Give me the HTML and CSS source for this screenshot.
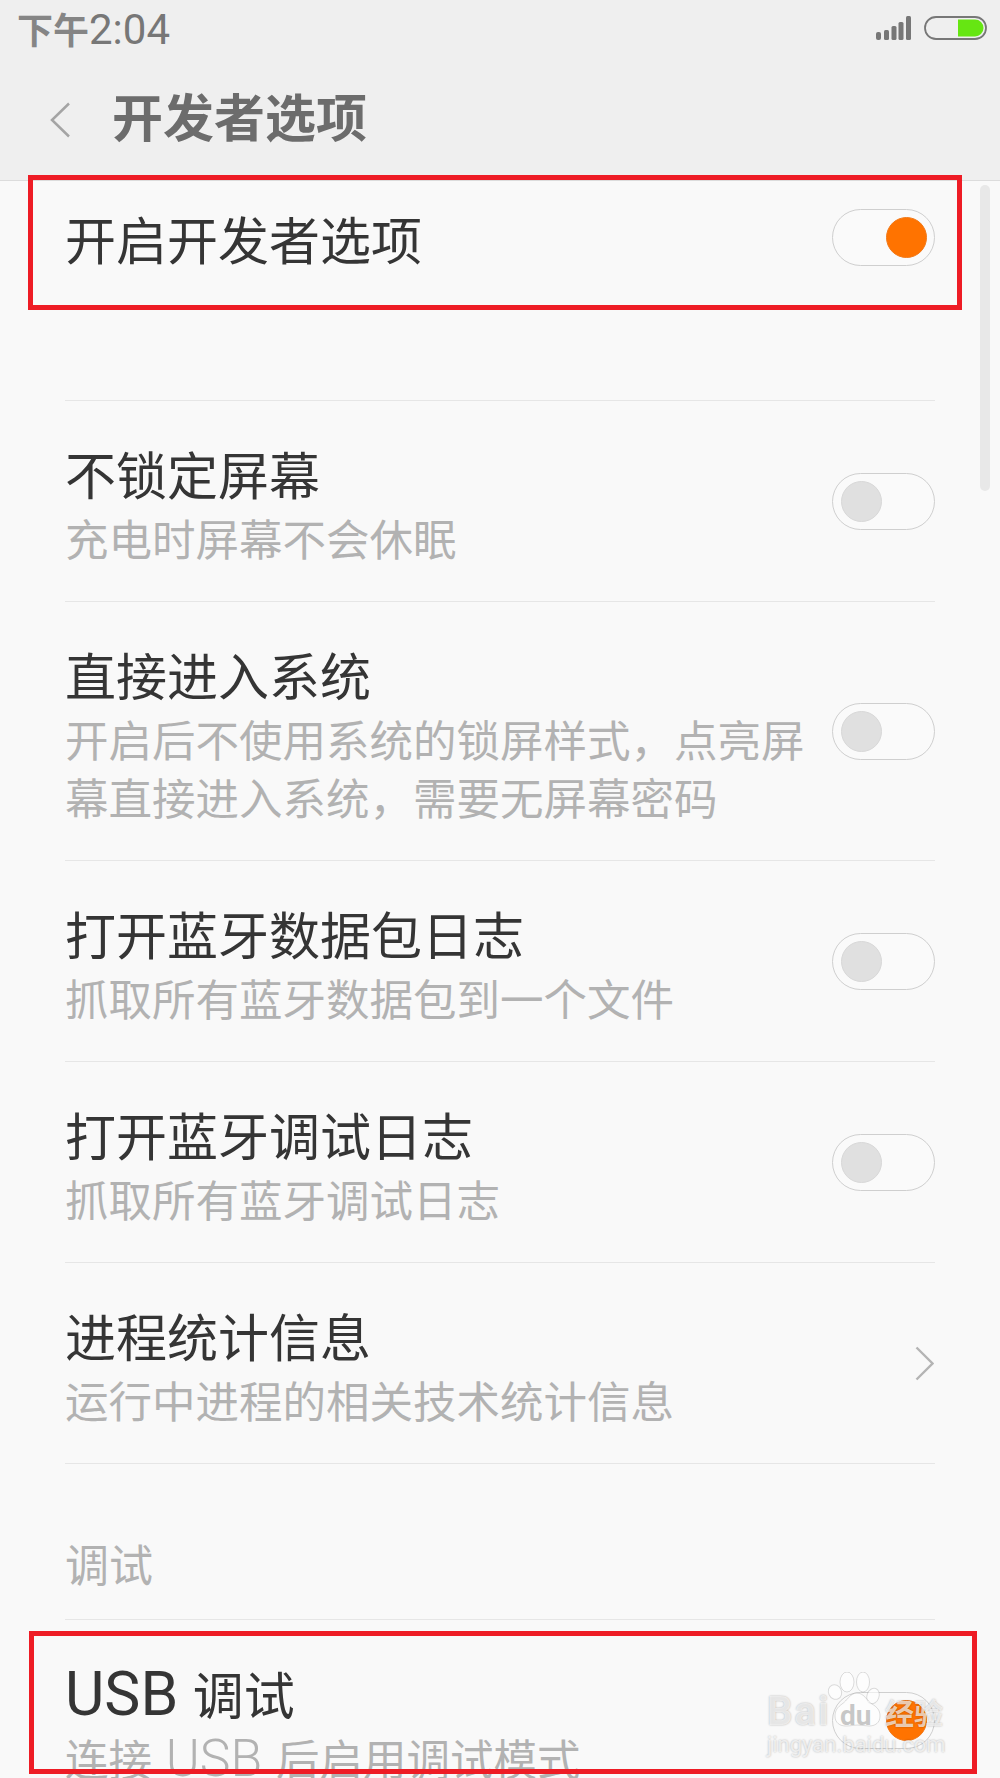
FILE: index.html
```html
<!DOCTYPE html>
<html lang="zh-CN">
<head>
    <meta charset="UTF-8">
    <meta name="viewport" content="width=device-width, initial-scale=1.0">
    <title>开发者选项</title>
    <link rel="stylesheet" href="styles.css">
</head>
<body>
    <div class="screen">
        <div class="header">
            <div class="status-bar">
                <span class="clock">下午<span class="clock-digits">2:04</span></span>
                <div class="status-icons">
                    <svg class="signal" width="36" height="25" viewBox="0 0 36 25">
                        <rect x="0" y="16" width="5" height="8" rx="2"/>
                        <rect x="8" y="14" width="5" height="10" rx="1.5"/>
                        <rect x="15.500" y="10" width="5" height="14" rx="1.5"/>
                        <rect x="22.500" y="6" width="5" height="18" rx="1.5"/>
                        <rect x="30" y="0" width="5" height="24" rx="1.5"/>
                    </svg>
                    <svg class="battery" width="63" height="24" viewBox="0 0 63 24">
                        <rect x="1" y="1" width="61" height="22" rx="11" fill="none" stroke="#777" stroke-width="1.800"/>
                        <path d="M34 3.500h17a8.500 8.500 0 0 1 0 17H34z" fill="#66e612"/>
                    </svg>
                </div>
            </div>
            <div class="nav-bar">
                <svg class="back" width="22" height="36" viewBox="0 0 22 36">
                    <path d="M20 1.500 3 18l17 16.500" fill="none" stroke="#a4a4a4" stroke-width="2.500"/>
                </svg>
                <h1>开发者选项</h1>
            </div>
        </div>

        <div class="list">
            <div class="row master">
                <div class="row-text"><div class="row-title">开启开发者选项</div></div>
                <div class="toggle on"><div class="knob"></div></div>
            </div>
            <div class="gap"></div>

            <div class="row">
                <div class="row-text">
                    <div class="row-title">不锁定屏幕</div>
                    <div class="row-sub">充电时屏幕不会休眠</div>
                </div>
                <div class="toggle"><div class="knob"></div></div>
            </div>
            <div class="row">
                <div class="row-text">
                    <div class="row-title">直接进入系统</div>
                    <div class="row-sub">开启后不使用系统的锁屏样式，点亮屏幕直接进入系统，需要无屏幕密码</div>
                </div>
                <div class="toggle"><div class="knob"></div></div>
            </div>
            <div class="row">
                <div class="row-text">
                    <div class="row-title">打开蓝牙数据包日志</div>
                    <div class="row-sub">抓取所有蓝牙数据包到一个文件</div>
                </div>
                <div class="toggle"><div class="knob"></div></div>
            </div>
            <div class="row">
                <div class="row-text">
                    <div class="row-title">打开蓝牙调试日志</div>
                    <div class="row-sub">抓取所有蓝牙调试日志</div>
                </div>
                <div class="toggle"><div class="knob"></div></div>
            </div>
            <div class="row">
                <div class="row-text">
                    <div class="row-title">进程统计信息</div>
                    <div class="row-sub">运行中进程的相关技术统计信息</div>
                </div>
                <svg class="chevron" width="19" height="35" viewBox="0 0 19 35">
                    <path d="M1.500 1.500 17.500 17.500 1.500 33.500" fill="none" stroke="#b4b4b4" stroke-width="2.400"/>
                </svg>
            </div>

            <div class="section-label">调试</div>

            <div class="row">
                <div class="row-text">
                    <div class="row-title"><span class="latin">USB</span> 调试</div>
                    <div class="row-sub">连接 <span class="latin">USB</span> 后启用调试模式</div>
                </div>
                <div class="toggle on"><div class="knob"></div></div>
            </div>
        </div>

        <div class="scrollbar"></div>
        <div class="mark mark-top"></div>
        <div class="mark mark-bottom"></div>

        <div class="watermark">
            <svg class="paw" width="54" height="56" viewBox="0 0 54 56">
                <ellipse cx="8" cy="20" rx="6.500" ry="7.500" transform="rotate(-25 8 20)"/>
                <ellipse cx="20" cy="10" rx="7" ry="10"/>
                <ellipse cx="36" cy="10" rx="6.500" ry="10"/>
                <ellipse cx="46" cy="24" rx="6" ry="8" transform="rotate(20 46 24)"/>
                <path d="M30 21c-7 0-10 8-15 11-4 3-7 6-7 12 0 7 5 10 11 10 5 0 8-1 12-1s7 1 11 1c6 0 11-3 11-10 0-6-3-9-8-12-5-3-8-11-15-11z"/>
            </svg>
            <div class="mark-line">
                <span class="mark-bai">Bai</span>
                <span class="mark-du">du</span>
                <span class="mark-cn">经验</span>
            </div>
            <div class="mark-url">jingyan.baidu.com</div>
        </div>
    </div>
</body>
</html>
```

FILE: styles.css
```css
* {
    box-sizing: border-box;
}

body {
    margin: 0;
    background-color: #f9f9f9;
    font-family: Roboto, "Noto Sans CJK SC", sans-serif;
}

.screen {
    position: relative;
    width: 1000px;
    height: 1778px;
    overflow: hidden;
    background-color: #f9f9f9;
}

.header {
    height: 181px;
    background-color: #efefef;
    border-bottom: 1px solid #dcdcdc;
}

.status-bar {
    display: flex;
    justify-content: space-between;
    align-items: center;
    height: 58px;
    padding: 0 13px 2px 17px;
}

.clock {
    font-size: 36px;
    font-weight: 700;
    color: #858585;
}

.clock-digits {
    font-size: 42px;
    font-weight: 400;
    line-height: 1;
    color: #777;
}

.status-icons {
    display: flex;
    align-items: center;
    gap: 12px;
}

.signal {
    fill: #777;
}

.nav-bar {
    display: flex;
    align-items: center;
    gap: 41px;
    height: 122px;
    padding: 2px 0 0 49px;
}

.nav-bar h1 {
    margin: 0;
    font-size: 51px;
    font-weight: 700;
    color: #6c6c6c;
    line-height: 64px;
}

.list {
    padding: 0 65px;
}

.row {
    display: flex;
    align-items: center;
    height: 201px;
    border-bottom: 1px solid #e6e6e6;
}

.row:nth-child(4) {
    height: 259px;
}

.row:last-child {
    border-bottom: none;
}

.row.master {
    height: 112px;
    border-bottom: none;
}

.gap {
    height: 108px;
    border-bottom: 1px solid #e6e6e6;
}

.row-text {
    flex: 1;
    padding: 12px 10px 0 0;
}

.row-title {
    font-size: 51px;
    line-height: 70px;
    color: #353535;
    word-spacing: 2px;
}

.row-sub {
    font-size: 43.500px;
    line-height: 58px;
    color: #b2b2b2;
    word-spacing: 3px;
}

.latin {
    font-size: 1.190em;
    font-weight: 300;
    line-height: 1;
}

.row-title .latin {
    font-weight: 400;
}

.toggle {
    display: flex;
    align-items: center;
    flex-shrink: 0;
    width: 103px;
    height: 57px;
    padding: 0 8px;
    background-color: #fafafa;
    border: 1px solid #cfcfcf;
    border-radius: 29px;
}

.toggle.on {
    justify-content: flex-end;
    padding-right: 7px;
}

.knob {
    width: 41px;
    height: 41px;
    border-radius: 50%;
    background-color: #e0e0e0;
    border: 1px solid #d8d8d8;
}

.toggle.on .knob {
    background-color: #ff7300;
    border-color: #f27a1a;
}

.chevron {
    flex-shrink: 0;
    margin-right: 1px;
}

.section-label {
    height: 156px;
    padding-top: 74px;
    font-size: 44px;
    line-height: 58px;
    color: #b2b2b2;
    border-bottom: 1px solid #e6e6e6;
}

.scrollbar {
    position: absolute;
    left: 980px;
    top: 185px;
    width: 10px;
    height: 306px;
    border-radius: 5px;
    background-color: #e8e8e8;
}

.mark {
    position: absolute;
    border: 5px solid #ee1c25;
}

.mark-top {
    left: 28px;
    top: 175px;
    width: 934px;
    height: 135px;
}

.mark-bottom {
    left: 29px;
    top: 1631px;
    width: 948px;
    height: 143px;
}

.watermark {
    position: absolute;
    left: 767px;
    top: 1672px;
    width: 180px;
    height: 86px;
    color: rgba(255, 255, 255, 0.7);
    text-shadow: 0 0 2px rgba(0, 0, 0, 0.3);
}

.paw {
    position: absolute;
    left: 60px;
    top: 0;
    fill: rgba(255, 255, 255, 0.6);
    stroke: rgba(0, 0, 0, 0.13);
    stroke-width: 1;
}

.mark-line {
    position: absolute;
    left: 0;
    top: 18px;
    display: flex;
    align-items: baseline;
    font-weight: 700;
    line-height: 44px;
}

.mark-bai {
    width: 73px;
    font-size: 40px;
    letter-spacing: 2px;
}

.mark-du {
    width: 45px;
    font-size: 28px;
    color: rgba(175, 175, 175, 0.7);
    text-shadow: none;
}

.mark-cn {
    font-size: 29px;
    white-space: nowrap;
}

.mark-url {
    position: absolute;
    left: 0;
    top: 60px;
    font-size: 22px;
    line-height: 26px;
    white-space: nowrap;
}
```
